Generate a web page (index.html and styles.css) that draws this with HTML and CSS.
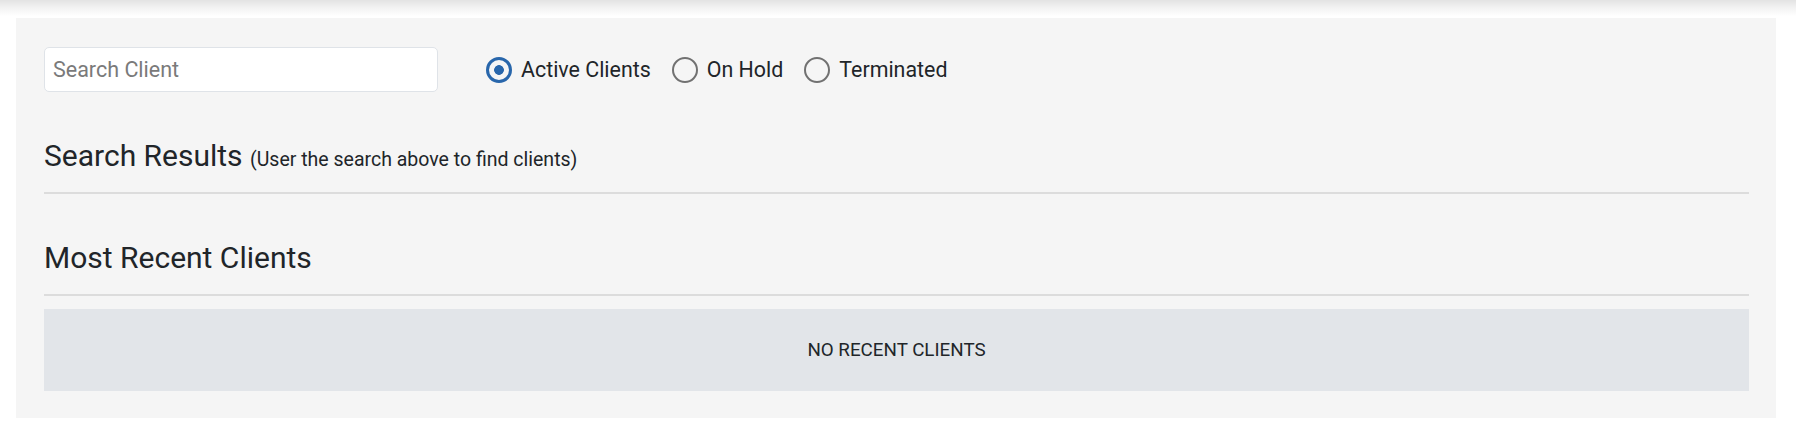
FILE: index.html
```html
<!DOCTYPE html>
<html lang="en">
<head>
<meta charset="utf-8">
<title>Clients</title>
<link rel="stylesheet" href="styles.css">
</head>
<body>
<div class="top-shade"></div>
<main class="panel">
  <div class="search-row">
    <input class="search-input" type="text" placeholder="Search Client">
    <div class="radio-group">
      <label class="radio-label"><input class="radio" type="radio" name="status" checked><span>Active Clients</span></label>
      <label class="radio-label"><input class="radio" type="radio" name="status"><span>On Hold</span></label>
      <label class="radio-label"><input class="radio" type="radio" name="status"><span>Terminated</span></label>
    </div>
  </div>
  <section class="section">
    <h2 class="section-title">Search Results <small class="section-note">(User the search above to find clients)</small></h2>
  </section>
  <section class="section">
    <h2 class="section-title">Most Recent Clients</h2>
  </section>
  <div class="empty-box">NO RECENT CLIENTS</div>
</main>
</body>
</html>
```
FILE: styles.css
```css
html, body {
  margin: 0;
  padding: 0;
  background: #ffffff;
  font-family: Roboto, "Liberation Sans", sans-serif;
  color: #212529;
}

.top-shade {
  height: 18px;
  background: linear-gradient(to bottom, #e3e3e3 0px, #f3f3f3 8px, #ffffff 16px);
}

.panel {
  margin: 0 20px 0 16px;
  height: 400px;
  box-sizing: border-box;
  background: #f5f5f5;
  padding: 29px 27px 27px 28px;
}

.search-row {
  display: flex;
  align-items: center;
  height: 45px;
}

.search-input {
  box-sizing: border-box;
  width: 394px;
  height: 45px;
  border: 1px solid #dfe3e8;
  border-radius: 5px;
  background: #ffffff;
  padding: 0 8px;
  font-family: Roboto, "Liberation Sans", sans-serif;
  font-size: 21.5px;
  color: #212529;
  outline: none;
}

.search-input::placeholder {
  color: #7a7a7a;
}

.radio-group {
  display: flex;
  align-items: center;
  gap: 21px;
  margin-left: 48px;
}

.radio-label {
  display: flex;
  align-items: center;
  gap: 9px;
  font-size: 21.4px;
  color: #212529;
  cursor: pointer;
}

.radio {
  appearance: none;
  -webkit-appearance: none;
  margin: 0;
  box-sizing: border-box;
  width: 26px;
  height: 26px;
  border: 2.5px solid #717171;
  border-radius: 50%;
  background: transparent;
}

.radio:checked {
  border: 3px solid #2866ab;
  background: radial-gradient(circle, #2866ab 0 4.5px, transparent 5.2px);
}

.section {
  margin-top: 46px;
  border-bottom: 2px solid #dcdcdc;
  padding-bottom: 18px;
}

.section-title {
  margin: 0;
  height: 36px;
  font-size: 30px;
  font-weight: 400;
  line-height: 36px;
  color: #212529;
}

.section-note {
  font-size: 19.5px;
  font-weight: 400;
  line-height: 1;
}

.empty-box {
  margin-top: 13px;
  height: 82px;
  background: #e2e5e9;
  display: flex;
  align-items: center;
  justify-content: center;
  font-size: 18.8px;
  color: #212529;
}
```
